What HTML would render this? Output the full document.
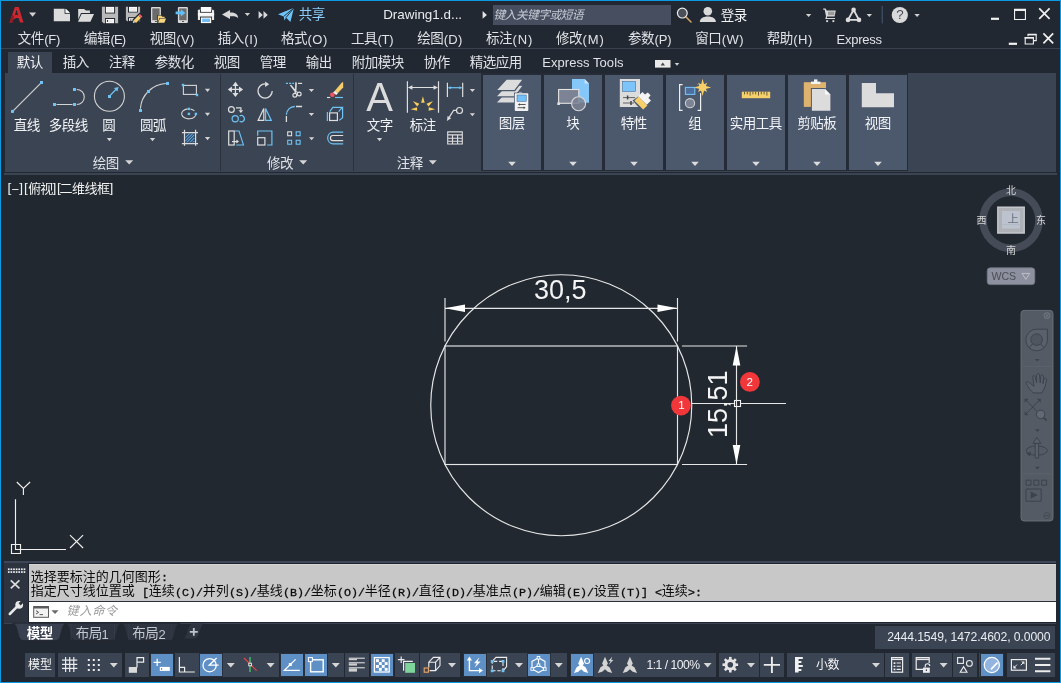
<!DOCTYPE html>
<html lang="zh-CN"><head><meta charset="utf-8"><title>Autodesk AutoCAD - Drawing1.dwg</title>
<style>
html,body{margin:0;padding:0;background:#222831;}
body{width:1061px;height:683px;overflow:hidden;font-family:"Liberation Sans",sans-serif;}
#app{will-change:transform;position:relative;width:1061px;height:683px;overflow:hidden;background:#222831;}
.bx,.tx,.cj,.ic{position:absolute;display:block;}
.tx{white-space:pre;font-family:"Liberation Sans",sans-serif;}
.mono{font-family:"Liberation Mono",monospace;}
.cj{white-space:pre;font-family:"Liberation Sans","Noto Sans CJK SC",sans-serif;}
.ic{overflow:visible;}

</style></head>
<body>
<div id="app">
<div class="bx" style="left:0px;top:0px;width:1061px;height:683px;background:#0e9ae2;"></div>
<div class="bx" style="left:1px;top:1px;width:1059px;height:681px;background:#222831;"></div>
<div class="bx" style="left:1px;top:48px;width:1059px;height:1px;background:#3a4250;"></div>
<div class="bx" style="left:8px;top:52px;width:44px;height:21px;background:#3b4453;"></div>
<div class="bx" style="left:5px;top:73px;width:1051px;height:99px;background:#3b4453;"></div>
<div class="bx" style="left:4px;top:173px;width:1053px;height:2px;background:#3b4453;"></div>
<div class="bx" style="left:1px;top:175px;width:1059px;height:386px;background:#212830;"></div>
<div class="bx" style="left:220px;top:74px;width:1px;height:97px;background:#2a313c;"></div>
<div class="bx" style="left:353px;top:74px;width:1px;height:97px;background:#2a313c;"></div>
<div class="bx" style="left:481px;top:73px;width:427.2px;height:98.2px;background:#262c37;"></div>
<div class="bx" style="left:483px;top:75px;width:58px;height:95px;background:#4c586c;"></div>
<div class="bx" style="left:544px;top:75px;width:58px;height:95px;background:#4c586c;"></div>
<div class="bx" style="left:605px;top:75px;width:58px;height:95px;background:#4c586c;"></div>
<div class="bx" style="left:666px;top:75px;width:58px;height:95px;background:#4c586c;"></div>
<div class="bx" style="left:727px;top:75px;width:58px;height:95px;background:#4c586c;"></div>
<div class="bx" style="left:788px;top:75px;width:58px;height:95px;background:#4c586c;"></div>
<div class="bx" style="left:849px;top:75px;width:58px;height:95px;background:#4c586c;"></div>
<span class="cj" style="left:298.75px;top:7.1px;width:26px;height:16.2px;font-size:13.5px;line-height:16.2px;letter-spacing:-0.5px;color:#8ccbf7">共享</span>
<span class="tx" style="left:383.2px;top:6.5px;font-size:13.4px;line-height:16.08px;color:#e9ebee;letter-spacing:0px">Drawing1.d...</span>
<div class="bx" style="left:493px;top:5px;width:178px;height:20px;background:#464e60;"></div>
<span class="cj" style="left:493.4px;top:7.6px;width:93.6px;height:14.16px;font-size:11.8px;line-height:14.16px;letter-spacing:-0.6px;font-style:italic;color:#c6cad2">键入关键字或短语</span>
<span class="cj" style="left:720.75px;top:7.8px;width:26px;height:16.2px;font-size:13.5px;line-height:16.2px;letter-spacing:-0.5px;color:#f2f3f5">登录</span>
<span class="cj" style="left:17.75px;top:30.8px;width:26px;height:16.2px;font-size:13.5px;line-height:16.2px;letter-spacing:-0.5px;color:#dfe2e7">文件</span>
<span class="tx" style="left:44.3px;top:32.0px;font-size:13px;line-height:15.6px;color:#dfe2e7;letter-spacing:-0.28px">(F)</span>
<span class="cj" style="left:84.0px;top:30.8px;width:26px;height:16.2px;font-size:13.5px;line-height:16.2px;letter-spacing:-0.5px;color:#dfe2e7">编辑</span>
<span class="tx" style="left:110.55px;top:32.0px;font-size:13px;line-height:15.6px;color:#dfe2e7;letter-spacing:-0.9px">(E)</span>
<span class="cj" style="left:149.75px;top:30.8px;width:26px;height:16.2px;font-size:13.5px;line-height:16.2px;letter-spacing:-0.5px;color:#dfe2e7">视图</span>
<span class="tx" style="left:176.3px;top:32.0px;font-size:13px;line-height:15.6px;color:#dfe2e7;letter-spacing:0.4px">(V)</span>
<span class="cj" style="left:217.75px;top:30.8px;width:26px;height:16.2px;font-size:13.5px;line-height:16.2px;letter-spacing:-0.5px;color:#dfe2e7">插入</span>
<span class="tx" style="left:244.3px;top:32.0px;font-size:13px;line-height:15.6px;color:#dfe2e7;letter-spacing:0.6px">(I)</span>
<span class="cj" style="left:281.0px;top:30.8px;width:26px;height:16.2px;font-size:13.5px;line-height:16.2px;letter-spacing:-0.5px;color:#dfe2e7">格式</span>
<span class="tx" style="left:307.55px;top:32.0px;font-size:13px;line-height:15.6px;color:#dfe2e7;letter-spacing:0.45px">(O)</span>
<span class="cj" style="left:351.0px;top:30.8px;width:26px;height:16.2px;font-size:13.5px;line-height:16.2px;letter-spacing:-0.5px;color:#dfe2e7">工具</span>
<span class="tx" style="left:377.55px;top:32.0px;font-size:13px;line-height:15.6px;color:#dfe2e7;letter-spacing:-0.28px">(T)</span>
<span class="cj" style="left:417.25px;top:30.8px;width:26px;height:16.2px;font-size:13.5px;line-height:16.2px;letter-spacing:-0.5px;color:#dfe2e7">绘图</span>
<span class="tx" style="left:443.8px;top:32.0px;font-size:13px;line-height:15.6px;color:#dfe2e7;letter-spacing:0.2px">(D)</span>
<span class="cj" style="left:486.0px;top:30.8px;width:26px;height:16.2px;font-size:13.5px;line-height:16.2px;letter-spacing:-0.5px;color:#dfe2e7">标注</span>
<span class="tx" style="left:512.55px;top:32.0px;font-size:13px;line-height:15.6px;color:#dfe2e7;letter-spacing:0.9px">(N)</span>
<span class="cj" style="left:556.0px;top:30.8px;width:26px;height:16.2px;font-size:13.5px;line-height:16.2px;letter-spacing:-0.5px;color:#dfe2e7">修改</span>
<span class="tx" style="left:582.55px;top:32.0px;font-size:13px;line-height:15.6px;color:#dfe2e7;letter-spacing:0.9px">(M)</span>
<span class="cj" style="left:628.0px;top:30.8px;width:26px;height:16.2px;font-size:13.5px;line-height:16.2px;letter-spacing:-0.5px;color:#dfe2e7">参数</span>
<span class="tx" style="left:654.55px;top:32.0px;font-size:13px;line-height:15.6px;color:#dfe2e7;letter-spacing:-0.14px">(P)</span>
<span class="cj" style="left:695.25px;top:30.8px;width:26px;height:16.2px;font-size:13.5px;line-height:16.2px;letter-spacing:-0.5px;color:#dfe2e7">窗口</span>
<span class="tx" style="left:721.8px;top:32.0px;font-size:13px;line-height:15.6px;color:#dfe2e7;letter-spacing:0.4px">(W)</span>
<span class="cj" style="left:766.75px;top:30.8px;width:26px;height:16.2px;font-size:13.5px;line-height:16.2px;letter-spacing:-0.5px;color:#dfe2e7">帮助</span>
<span class="tx" style="left:793.3px;top:32.0px;font-size:13px;line-height:15.6px;color:#dfe2e7;letter-spacing:0.45px">(H)</span>
<span class="tx" style="left:836.6px;top:32.0px;font-size:13px;line-height:15.6px;color:#dfe2e7;letter-spacing:-0.25px">Express</span>
<span class="cj" style="left:16.75px;top:55.1px;width:26px;height:16.2px;font-size:13.5px;line-height:16.2px;letter-spacing:-0.5px;color:#f2f3f5">默认</span>
<span class="cj" style="left:62.75px;top:55.1px;width:26px;height:16.2px;font-size:13.5px;line-height:16.2px;letter-spacing:-0.5px;color:#dfe2e7">插入</span>
<span class="cj" style="left:108.75px;top:55.1px;width:26px;height:16.2px;font-size:13.5px;line-height:16.2px;letter-spacing:-0.5px;color:#dfe2e7">注释</span>
<span class="cj" style="left:154.75px;top:55.1px;width:39px;height:16.2px;font-size:13.5px;line-height:16.2px;letter-spacing:-0.5px;color:#dfe2e7">参数化</span>
<span class="cj" style="left:213.75px;top:55.1px;width:26px;height:16.2px;font-size:13.5px;line-height:16.2px;letter-spacing:-0.5px;color:#dfe2e7">视图</span>
<span class="cj" style="left:259.75px;top:55.1px;width:26px;height:16.2px;font-size:13.5px;line-height:16.2px;letter-spacing:-0.5px;color:#dfe2e7">管理</span>
<span class="cj" style="left:305.75px;top:55.1px;width:26px;height:16.2px;font-size:13.5px;line-height:16.2px;letter-spacing:-0.5px;color:#dfe2e7">输出</span>
<span class="cj" style="left:351.75px;top:55.1px;width:52px;height:16.2px;font-size:13.5px;line-height:16.2px;letter-spacing:-0.5px;color:#dfe2e7">附加模块</span>
<span class="cj" style="left:423.75px;top:55.1px;width:26px;height:16.2px;font-size:13.5px;line-height:16.2px;letter-spacing:-0.5px;color:#dfe2e7">协作</span>
<span class="cj" style="left:469.75px;top:55.1px;width:52px;height:16.2px;font-size:13.5px;line-height:16.2px;letter-spacing:-0.5px;color:#dfe2e7">精选应用</span>
<span class="tx" style="left:542.3px;top:55.3px;font-size:13px;line-height:15.6px;color:#dfe2e7;letter-spacing:0.05px">Express Tools</span>
<span class="cj" style="left:13.75px;top:118.4px;width:26px;height:16.2px;font-size:13.5px;line-height:16.2px;letter-spacing:-0.5px;color:#f2f3f5">直线</span>
<span class="cj" style="left:48.75px;top:118.4px;width:39px;height:16.2px;font-size:13.5px;line-height:16.2px;letter-spacing:-0.5px;color:#f2f3f5">多段线</span>
<span class="cj" style="left:102.25px;top:118.4px;width:13px;height:16.2px;font-size:13.5px;line-height:16.2px;letter-spacing:-0.5px;color:#f2f3f5">圆</span>
<span class="cj" style="left:140.05px;top:118.4px;width:26px;height:16.2px;font-size:13.5px;line-height:16.2px;letter-spacing:-0.5px;color:#f2f3f5">圆弧</span>
<span class="cj" style="left:366.75px;top:118.4px;width:26px;height:16.2px;font-size:13.5px;line-height:16.2px;letter-spacing:-0.5px;color:#f2f3f5">文字</span>
<span class="cj" style="left:409.75px;top:118.4px;width:26px;height:16.2px;font-size:13.5px;line-height:16.2px;letter-spacing:-0.5px;color:#f2f3f5">标注</span>
<span class="cj" style="left:92.75px;top:156.1px;width:26px;height:16.2px;font-size:13.5px;line-height:16.2px;letter-spacing:-0.5px;color:#dfe2e7">绘图</span>
<span class="cj" style="left:267.05px;top:156.1px;width:26px;height:16.2px;font-size:13.5px;line-height:16.2px;letter-spacing:-0.5px;color:#dfe2e7">修改</span>
<span class="cj" style="left:396.75px;top:156.1px;width:26px;height:16.2px;font-size:13.5px;line-height:16.2px;letter-spacing:-0.5px;color:#dfe2e7">注释</span>
<span class="cj" style="left:498.75px;top:116.1px;width:26px;height:16.2px;font-size:13.5px;line-height:16.2px;letter-spacing:-0.5px;color:#f2f3f5">图层</span>
<span class="cj" style="left:566.25px;top:116.1px;width:13px;height:16.2px;font-size:13.5px;line-height:16.2px;letter-spacing:-0.5px;color:#f2f3f5">块</span>
<span class="cj" style="left:620.75px;top:116.1px;width:26px;height:16.2px;font-size:13.5px;line-height:16.2px;letter-spacing:-0.5px;color:#f2f3f5">特性</span>
<span class="cj" style="left:688.25px;top:116.1px;width:13px;height:16.2px;font-size:13.5px;line-height:16.2px;letter-spacing:-0.5px;color:#f2f3f5">组</span>
<span class="cj" style="left:729.75px;top:116.1px;width:52px;height:16.2px;font-size:13.5px;line-height:16.2px;letter-spacing:-0.5px;color:#f2f3f5">实用工具</span>
<span class="cj" style="left:797.25px;top:116.1px;width:39px;height:16.2px;font-size:13.5px;line-height:16.2px;letter-spacing:-0.5px;color:#f2f3f5">剪贴板</span>
<span class="cj" style="left:864.75px;top:116.1px;width:26px;height:16.2px;font-size:13.5px;line-height:16.2px;letter-spacing:-0.5px;color:#f2f3f5">视图</span>
<svg class="ic" style="left:0px;top:0px" width="1061" height="75" viewBox="0 0 1061 75"><path d="M9.4 22.6L14.9 7H18.7L23.5 22.6H20L18.7 18.2C16.6 17.7 14.6 18.3 13.3 19.7L12.3 22.6Z" fill="#cc2832"/><path d="M14.9 15.2L16.6 9.6L18.1 15.4C16.9 15 15.9 15 14.9 15.2Z" fill="#222831"/><path d="M9.4 22.6L12.3 14.4L14.2 16.6L12.3 22.6Z" fill="#8f1c24"/><path d="M29.1 12.6h7l-3.5 4.2z" fill="#d2d2d2"/><path d="M53.8 8.7H64.6V13.7H70V21.3H53.8Z" fill="#dcdcdc"/><path d="M65.6 8.7L70 13V12.7H65.6Z" fill="#fafafa"/><path d="M65.7 8.8L69.9 12.8H65.7Z" fill="#fafafa"/><path d="M78.2 8.9H84L86 10.6H89.9V12.9H81L78.2 19.5Z" fill="#dcdcdc"/><path d="M81.6 13.9H94L90.4 21.8H78Z" fill="#dcdcdc"/><path d="M101.9 6.8H118.1V23.2H103.5L101.9 21.6Z" fill="#b9b9b9"/><rect x="105" y="6" width="10.1" height="7.5" fill="#222831"/><rect x="105.9" y="6.9" width="8.2" height="5.7" fill="#ffffff"/><rect x="106.7" y="7.7" width="6.6" height="4.1" fill="#ececec"/><rect x="105" y="18" width="10.1" height="6" fill="#222831"/><rect x="105.9" y="19" width="8.2" height="4.2" fill="#ffffff"/><rect x="108.4" y="19.8" width="5" height="2.6" fill="#ececec"/><rect x="106.9" y="19.9" width="1.2" height="2" fill="#333a45"/><path d="M125.9 6.8H140.1V21.3H127.3L125.9 19.9Z" fill="#b9b9b9"/><rect x="128" y="6" width="9.9" height="6.5" fill="#222831"/><rect x="129" y="6.9" width="8" height="4.8" fill="#ffffff"/><rect x="129.8" y="7.7" width="6.4" height="3.2" fill="#ececec"/><rect x="128" y="17.2" width="9" height="5" fill="#222831"/><rect x="129" y="18.2" width="5" height="2.7" fill="#ffffff"/><rect x="130.3" y="19.2" width="1.1" height="1.7" fill="#333a45"/><path d="M131.8 24L132.6 19.6L139.6 12.6L143.6 16.6L136.6 23.6Z" fill="#222831"/><path d="M132.8 23L133.5 20.4L135.4 22.3Z" fill="#f0f0f0"/><path d="M133.5 20.4L138.4 15.5L140.9 18L136 22.9L135.4 22.3Z" fill="#f7d272"/><path d="M138.4 15.5L139.9 14L142.4 16.5L140.9 18Z" fill="#f4626a"/><rect x="151" y="7" width="9.9" height="16" rx="1" fill="#d8d8d8"/><rect x="152.3" y="8.4" width="7.3" height="11.8" fill="#6b6b6b"/><rect x="155" y="21" width="1.9" height="0.9" fill="#444"/><path d="M157.2 14.9H161.6L162.8 16.1H166.5V23.4H157.2Z" fill="#222831"/><path d="M157.9 15.6H161.2L162.3 16.8H164.6V18H159.5L157.9 21.8Z" fill="#f2cf77"/><path d="M159.9 18.6H166.1L164.3 22.8H158.1Z" fill="#f5d680"/><rect x="177.9" y="7" width="10" height="16" rx="1" fill="#d8d8d8"/><rect x="179.2" y="8.4" width="7.4" height="11.8" fill="#6b6b6b"/><rect x="182" y="21" width="1.9" height="0.9" fill="#444"/><path d="M175.6 11.5H180.8V9.2L185.4 12.9L180.8 16.6V14.3H175.6Z" fill="#5ec0f8"/><rect x="200.9" y="7" width="10.3" height="4.9" fill="#fafafa"/><path d="M198.9 9.8H213.1L214.1 10.8V20H197.9V10.8Z" fill="#e9e9e9"/><rect x="197.9" y="9.8" width="2.2" height="2.2" fill="#e9e9e9"/><rect x="200" y="9.8" width="12" height="2.9" fill="#222831"/><rect x="200.9" y="7" width="10.3" height="4.9" fill="#fafafa"/><rect x="197.9" y="13" width="16.2" height="2.6" fill="#fafafa"/><rect x="200" y="16.6" width="12" height="7.3" fill="#222831"/><rect x="200.9" y="17.5" width="10.3" height="5.6" fill="#fafafa"/><rect x="202.1" y="18.6" width="7.9" height="3.4" fill="#73bdf5"/><path d="M222 14.5L230 9.9V12.6C234.5 12.4 238 14 238.2 18.3C236.6 16.3 234 16 230 16.3V19.1Z" fill="#d8d8d8"/><path d="M244.70000000000002 12.9h5.4l-2.7 3.2z" fill="#d2d2d2"/><path d="M258.6 11V18.8L262.8 14.9ZM263.5 11V18.8L267.8 14.9Z" fill="#d8d8d8"/><path d="M278 14.2L294 7.8L290.4 21.9L286 17.6L284.6 20.6L283.6 16.5Z" fill="#6ec3f7"/><path d="M283.6 16.5L294 7.8L286 17.6" fill="none" stroke="#222831" stroke-width="0.9"/><path d="M482.6 11V18.8L486.9 14.9Z" fill="#e6e6e6"/><path d="M686 17L691 22" stroke="#d2a264" stroke-width="1.6" stroke-linecap="round"/><circle cx="682.3" cy="13.1" r="4.9" fill="#4a4f59" stroke="#eeeeee" stroke-width="1.2"/><circle cx="707.8" cy="11.2" r="4.3" fill="#dadada"/><path d="M699.8 21.9C699.8 18.6 703 16.4 707.8 16.4C712.6 16.4 715.9 18.6 715.9 21.9Z" fill="#dadada"/><path d="M805.9 14h5.4l-2.7 3z" fill="#d2d2d2"/><path d="M823.2 8.6H825.6L826.6 10.6H835.8L834.6 16.4H827.2L826.8 17.9H835V19H825.3L826 16.2L824.7 9.7H823.2Z" fill="#d8d8d8"/><rect x="828" y="11.6" width="6.3" height="3.6" fill="#9a9a9a"/><rect x="826.2" y="20.2" width="1.9" height="1.9" fill="#d8d8d8"/><rect x="832.4" y="20.2" width="1.9" height="1.9" fill="#d8d8d8"/><path d="M848 19.9L853.6 9.9L859 19.9Z" fill="none" stroke="#dcdcdc" stroke-width="1.9" stroke-linejoin="round"/><circle cx="853.6" cy="9.9" r="2.3" fill="#dcdcdc"/><circle cx="848" cy="19.9" r="2.3" fill="#dcdcdc"/><circle cx="859" cy="19.9" r="2.3" fill="#dcdcdc"/><path d="M866.5999999999999 14h5.4l-2.7 3z" fill="#d2d2d2"/><rect x="881.7" y="6" width="1" height="17.4" fill="#46597a"/><circle cx="899.8" cy="15" r="8.1" fill="#d9d9d9"/><path d="M914.4 14h5.4l-2.7 3z" fill="#d2d2d2"/><rect x="991" y="17.7" width="8" height="2.2" fill="#f0f0f0"/><path d="M1014 8.8H1026V20H1014ZM1015.1 10.9V18.9H1024.9V10.9Z" fill="#f0f0f0" fill-rule="evenodd"/><path d="M1039.2 8.4L1049.6 18.9M1049.6 8.4L1039.2 18.9" stroke="#f0f0f0" stroke-width="1.7"/><rect x="1008.8" y="42.7" width="8.2" height="2.2" fill="#f0f0f0"/><path d="M1028 36.3V34.3H1036.2V40.6H1033.6" fill="none" stroke="#f0f0f0" stroke-width="1.1"/><rect x="1028" y="34" width="8.2" height="1.4" fill="#f0f0f0"/><path d="M1025.2 37.6H1033.4V44H1025.2Z" fill="none" stroke="#f0f0f0" stroke-width="1.1"/><rect x="1024.7" y="37" width="9.2" height="1.6" fill="#f0f0f0"/><path d="M1043.4 33.4L1053.2 43.4M1053.2 33.4L1043.4 43.4" stroke="#f0f0f0" stroke-width="1.7"/><rect x="655" y="60" width="15.5" height="7.6" fill="#e9e9e9"/><path d="M660.6 65.4H665L662.8 62.4Z" fill="#444"/><path d="M674.7 63h4.6l-2.3 2.8z" fill="#d2d2d2"/></svg>
<span class="tx" style="left:896.2px;top:7.4px;font-size:13.4px;line-height:16.08px;color:#4a4e57;">?</span>
<svg class="ic" style="left:5px;top:75px" width="216" height="97" viewBox="5 75 216 97"><path d="M13.6 110.4L40.6 83.4" stroke="#d4d4d4" stroke-width="1.1"/><rect x="11.0" y="109.9" width="3" height="3" fill="#6ec3f4"/><rect x="40.0" y="81.0" width="3" height="3" fill="#6ec3f4"/><path d="M56.5 104.5H72.5M76.8 104.5A7.5 7.5 0 0 0 76.8 89.5" fill="none" stroke="#d4d4d4" stroke-width="1.1"/><rect x="53.0" y="103.0" width="3" height="3" fill="#6ec3f4"/><rect x="73.0" y="103.0" width="3" height="3" fill="#6ec3f4"/><rect x="73.0" y="88.0" width="3" height="3" fill="#6ec3f4"/><circle cx="109.4" cy="96.3" r="15" fill="none" stroke="#d4d4d4" stroke-width="1.1"/><path d="M110.5 95L116 89.5" stroke="#6ec3f4" stroke-width="1.2"/><path d="M118.6 86.9L117.4 91.6L113.9 88.1Z" fill="#6ec3f4"/><rect x="108.0" y="95.0" width="3" height="3" fill="#6ec3f4"/><path d="M106.80000000000001 138h5.2l-2.6 3.2z" fill="#d4d4d4"/><path d="M140.4 108.6A27 27 0 0 1 165.8 83.5" fill="none" stroke="#d4d4d4" stroke-width="1.1"/><rect x="139.0" y="109.0" width="3" height="3" fill="#6ec3f4"/><rect x="147.0" y="90.0" width="3" height="3" fill="#6ec3f4"/><rect x="166.0" y="82.0" width="3" height="3" fill="#6ec3f4"/><path d="M149.9 138h5.2l-2.6 3.2z" fill="#d4d4d4"/><rect x="183.4" y="85.4" width="13" height="9" fill="none" stroke="#d4d4d4" stroke-width="1.1"/><rect x="181.8" y="83.8" width="2.4" height="2.4" fill="#6ec3f4"/><rect x="195.8" y="93.8" width="2.4" height="2.4" fill="#6ec3f4"/><path d="M204.9 88.8h5.2l-2.6 3.2z" fill="#d4d4d4"/><path d="M187.6 108.9A7.2 5 0 1 0 196 113.2" fill="none" stroke="#d4d4d4" stroke-width="1.1"/><path d="M190.6 109.1A7.2 5 0 0 1 194.4 110.8" fill="none" stroke="#d4d4d4" stroke-width="1.1"/><rect x="187.70000000000002" y="107.7" width="2.4" height="2.4" fill="#6ec3f4"/><rect x="187.70000000000002" y="112.7" width="2.4" height="2.4" fill="#6ec3f4"/><rect x="194.70000000000002" y="112.7" width="2.4" height="2.4" fill="#6ec3f4"/><path d="M204.9 112.8h5.2l-2.6 3.2z" fill="#d4d4d4"/><rect x="185.6" y="133.6" width="8.8" height="8.8" fill="#33557c"/><path d="M185.6 137.6L189.6 133.6M185.6 140.8L192.8 133.6M186.8 142.4L194.4 134.8M190 142.4L194.4 138M193 142.4L194.4 141" stroke="#79c9f8" stroke-width="0.85"/><path d="M184.5 129.8V145.8M195.6 129.8V145.8M181.9 132.6H198M181.9 143.7H198" stroke="#dcdcdc" stroke-width="1.2"/><path d="M204.9 137h5.2l-2.6 3.2z" fill="#d4d4d4"/><path d="M125.19999999999999 160.2h8l-4.0 4.4z" fill="#d4d4d4"/></svg>
<svg class="ic" style="left:221px;top:75px" width="132" height="97" viewBox="221 75 132 97"><path d="M235.45 83.5V95.4M229.5 89.45H241.4" stroke="#dedede" stroke-width="1.3"/><path d="M235.45 81.8L238.5 85.9H232.4ZM235.45 97.1L238.5 93H232.4ZM227.8 89.45L231.9 86.4V92.5ZM243.1 89.45L239 86.4V92.5Z" fill="#dedede"/><path d="M265.1 83.9A7.1 7.1 0 1 0 272.2 91" fill="none" stroke="#dedede" stroke-width="1.3"/><path d="M269.2 84.3L265.1 81.6V87Z" fill="#dedede"/><path d="M285.9 83.4H294" stroke="#6ec3f4" stroke-width="1.2" stroke-dasharray="2.1 1.1"/><path d="M298 83.4H302.1" stroke="#dedede" stroke-width="1.2"/><path d="M295.2 82.2L296.9 82.6L296.4 91.2L295 92.6ZM289.8 85.3L291.2 84.8L296.9 91.6L295.4 92.7Z" fill="#dedede"/><circle cx="294.8" cy="95.2" r="1.9" fill="none" stroke="#dedede" stroke-width="1.2"/><circle cx="299.2" cy="94" r="1.9" fill="none" stroke="#dedede" stroke-width="1.2"/><path d="M295.4 91.8L295 93.4M296.4 91.6L297.8 92.8" stroke="#dedede" stroke-width="1.2"/><path d="M308.7 88.9h5.4l-2.7 3.2z" fill="#d4d4d4"/><path d="M334.2 91.6L342.3 81.9L343.2 82.4V87.4L337.4 93.4Z" fill="#f5cd6c"/><path d="M333 92.7L334.4 91.3L337.7 93.2L336.3 94.9Z" fill="#f4f4f4"/><circle cx="332.4" cy="94.8" r="2.3" fill="#f2555f"/><path d="M327 97.5H330.2" stroke="#dedede" stroke-width="1.2"/><path d="M335 97.5H343" stroke="#6ec3f4" stroke-width="1.2"/><circle cx="231.4" cy="109.5" r="2.9" fill="none" stroke="#dedede" stroke-width="1.2"/><path d="M236 107.9H240.9V110.6" fill="none" stroke="#dedede" stroke-width="1.2"/><path d="M240.9 113.1L238.6 110.2H243.2Z" fill="#dedede"/><circle cx="235.2" cy="118.7" r="3.1" fill="none" stroke="#6ec3f4" stroke-width="1.2"/><path d="M239.6 116.1A3.1 3.1 0 1 1 239.6 121.3" fill="none" stroke="#6ec3f4" stroke-width="1.2"/><path d="M263.8 108.5V120.4H258.1Z" fill="none" stroke="#dedede" stroke-width="1.2"/><path d="M265.6 108.5V120.4H271.3Z" fill="none" stroke="#6ec3f4" stroke-width="1.2"/><path d="M286.4 114.7A8.4 8.4 0 0 1 294.8 106.5" fill="none" stroke="#6ec3f4" stroke-width="1.3"/><path d="M286.4 116V121.9M296 106.5H302.1" stroke="#dedede" stroke-width="1.3"/><path d="M308.7 112.9h5.4l-2.7 3.2z" fill="#d4d4d4"/><path d="M329.8 111.6L332.8 107.3H342.3L338.6 111.6M342.6 107.4V117.6L339.2 120.4M327.4 112V121" fill="none" stroke="#6ec3f4" stroke-width="1.2"/><rect x="329.6" y="112.9" width="7.8" height="7.6" fill="none" stroke="#dedede" stroke-width="1.2"/><path d="M234.8 131H239L243.5 145H236.3" fill="none" stroke="#6ec3f4" stroke-width="1.1"/><rect x="228.7" y="131" width="5.5" height="14" fill="none" stroke="#dedede" stroke-width="1.2"/><path d="M232 141.6H237" stroke="#dedede" stroke-width="1.2"/><path d="M239 141.6L236.4 139.6V143.6Z" fill="#dedede"/><path d="M257.7 135.7V131H271.9V145H267.2" fill="none" stroke="#6ec3f4" stroke-width="1.2"/><rect x="257.7" y="137.7" width="7.2" height="7.3" fill="none" stroke="#dedede" stroke-width="1.2"/><rect x="287.7" y="131.8" width="3.9" height="3.9" fill="none" stroke="#dedede" stroke-width="1.1"/><rect x="296.2" y="131.8" width="3.9" height="3.9" fill="none" stroke="#6ec3f4" stroke-width="1.1"/><rect x="287.7" y="140.3" width="3.9" height="3.9" fill="none" stroke="#6ec3f4" stroke-width="1.1"/><rect x="296.2" y="140.3" width="3.9" height="3.9" fill="none" stroke="#6ec3f4" stroke-width="1.1"/><path d="M309.0 137.2h5.2l-2.6 3z" fill="#d4d4d4"/><path d="M343.2 132.2H332.8A5.9 5.9 0 0 0 332.8 143.9H343.2" fill="none" stroke="#6ec3f4" stroke-width="1.2"/><path d="M343.2 135.5H333A2.6 2.6 0 0 0 333 140.7H343.2" fill="none" stroke="#dedede" stroke-width="1.2"/><path d="M299.2 160.2h8l-4.0 4.4z" fill="#d4d4d4"/></svg>
<svg class="ic" style="left:354px;top:75px" width="127" height="97" viewBox="354 75 127 97"><path d="M407.4 81.2V112.8M438.5 81.2V112.8M409 87.5H437" stroke="#dedede" stroke-width="1.2"/><path d="M407.9 87.5L412.4 85.2V89.8ZM438 87.5L433.5 85.2V89.8Z" fill="#dedede"/><path d="M424.70 102.80L422.90 96.20L421.10 102.80Z" fill="#f7cb5d"/><path d="M428.62 106.55L432.96 101.02L426.45 103.67Z" fill="#f7cb5d"/><path d="M419.35 103.67L412.84 101.02L417.18 106.55Z" fill="#f7cb5d"/><path d="M428.64 110.70L435.29 109.23L428.76 107.30Z" fill="#f7cb5d"/><path d="M417.04 107.30L410.51 109.23L417.16 110.70Z" fill="#f7cb5d"/><path d="M447.4 82.7V97M462.7 82.7V97" stroke="#dedede" stroke-width="1.2"/><path d="M448.6 87.7H461.5" stroke="#6ec3f4" stroke-width="1.2"/><path d="M448 87.7L450.8 86.2V89.2ZM462.1 87.7L459.3 86.2V89.2Z" fill="#6ec3f4"/><path d="M469.79999999999995 89h5.2l-2.6 3z" fill="#d4d4d4"/><circle cx="459.5" cy="110.5" r="3" fill="none" stroke="#dedede" stroke-width="1.2"/><path d="M456.4 110.4H453.6L449 117.6" fill="none" stroke="#dedede" stroke-width="1.2"/><path d="M446.9 120.9L447.6 116L451.2 118.3Z" fill="#dedede"/><path d="M469.79999999999995 113.2h5.2l-2.6 3z" fill="#d4d4d4"/><path d="M447.7 131.9H462.3V144H447.7ZM447.7 134.9H462.3M447.7 138.2H462.3M447.7 141.2H462.3M452.5 134.9V144M457.6 134.9V144" fill="none" stroke="#dedede" stroke-width="1.1"/><path d="M376.9 138h5.2l-2.6 3.2z" fill="#d4d4d4"/><path d="M428.8 160.2h8l-4.0 4.4z" fill="#d4d4d4"/></svg>
<span class="tx" style="left:366.3px;top:73.0px;font-size:40px;line-height:48.0px;color:#dcdcdc;">A</span>
<svg class="ic" style="left:481px;top:75px" width="430" height="97" viewBox="481 75 430 97"><path d="M495.6 103.10000000000001L506.4 91.4H523.6L514.8 103.10000000000001Z" fill="#dcdcdc" stroke="#4c586c" stroke-width="1.3"/><path d="M495.6 96.9L506.4 85.2H523.6L514.8 96.9Z" fill="#dcdcdc" stroke="#4c586c" stroke-width="1.3"/><path d="M495.6 90.7L506.4 79H523.6L514.8 90.7Z" fill="#dcdcdc" stroke="#4c586c" stroke-width="1.3"/><rect x="514" y="92.6" width="15" height="19.2" fill="#4c586c"/><rect x="514.8" y="93.3" width="13.5" height="17.7" rx="0.8" fill="#f2f2f2"/><rect x="517" y="95" width="9.2" height="6.3" fill="#74c0f8" stroke="#2b5f8f" stroke-width="0.5"/><path d="M518.6 104.5H525.6M517.6 107.7H524.6" stroke="#444" stroke-width="0.9"/><path d="M518 104.5L520 103.2V105.8ZM525.6 107.7L523.6 106.4V109Z" fill="#444"/><path d="M572 79H584.6L589 83.4V102.8H572Z" fill="#86c7fa"/><path d="M584.6 79V83.4H589Z" fill="#c9e6fc"/><rect x="558.6" y="89.5" width="20.2" height="13.8" fill="#7b8394" stroke="#e2e2e2" stroke-width="1.1"/><rect x="557.3" y="102.4" width="2.6" height="2.6" fill="#e2e2e2"/><circle cx="578.6" cy="103.7" r="7" fill="#7b8394" fill-opacity="0.85" stroke="#d6d6d6" stroke-width="1.1"/><rect x="619.8" y="79" width="20.2" height="28" fill="#dcdcdc"/><rect x="622.6" y="81.5" width="13" height="9.9" fill="#7cc4f9" stroke="#2b5f8f" stroke-width="0.5"/><path d="M623 97.6H635M623 103H634" stroke="#555" stroke-width="0.9"/><path d="M627.6 95.6V99.6M631 101V105" stroke="#444" stroke-width="1.5"/><path d="M632.6 100.6L640.4 95L650 104.6L643 112.2Z" fill="#4c586c"/><path d="M634.4 100.8L638.6 96.6L647.4 105.4L643.2 109.6Z" fill="#f6cf6b"/><path d="M638.2 96.2L642.4 92L645 94.6L647.8 92.4L650.6 95.2L648.4 98L651 100.6L646.8 104.8Z" fill="#f4f4f4"/><path d="M682.6 84.7H679.6V110.3H682.6M697.6 84.7H700.6V110.3H697.6" fill="none" stroke="#f0f0f0" stroke-width="1.2"/><rect x="685.4" y="87.4" width="9.4" height="7" fill="#4d6f9d" stroke="#74c0f8" stroke-width="1.1"/><circle cx="690" cy="103.2" r="4.6" fill="#7b8394" stroke="#d0d0d0" stroke-width="1.1"/><circle cx="702.6" cy="87.4" r="6" fill="#4c586c"/><path d="M702.60 89.70L711.20 87.40L702.60 85.10Z" fill="#f8cf66"/><path d="M704.23 89.03L707.27 82.73L700.97 85.77Z" fill="#f8cf66"/><path d="M704.90 87.40L702.60 78.80L700.30 87.40Z" fill="#f8cf66"/><path d="M704.23 85.77L697.93 82.73L700.97 89.03Z" fill="#f8cf66"/><path d="M702.60 85.10L694.00 87.40L702.60 89.70Z" fill="#f8cf66"/><path d="M700.97 85.77L697.93 92.07L704.23 89.03Z" fill="#f8cf66"/><path d="M700.30 87.40L702.60 96.00L704.90 87.40Z" fill="#f8cf66"/><path d="M700.97 89.03L707.27 92.07L704.23 85.77Z" fill="#f8cf66"/><circle cx="702.6" cy="87.4" r="3.4" fill="#f8cf66"/><rect x="741.8" y="91.7" width="28.4" height="6.5" fill="#f5d06a"/><path d="M744.5 91.7V94.4M747.3 91.7V94.4M750.1 91.7V95.6M752.9 91.7V94.4M755.7 91.7V94.4M758.5 91.7V95.6M761.3 91.7V94.4M764.1 91.7V94.4M766.9 91.7V95.6" stroke="#5d5030" stroke-width="0.9"/><rect x="803.8" y="82.2" width="22.2" height="24.7" fill="#deb26f"/><rect x="811" y="81.6" width="9.4" height="2.4" fill="#f4f4f4"/><rect x="814" y="79.4" width="3.4" height="2.8" fill="#f4f4f4"/><path d="M810.9 88H825.4L831.4 94V111.8H810.9Z" fill="#4c586c"/><path d="M811.9 89H825L830.4 94.4V110.8H811.9Z" fill="#dcdcdc"/><path d="M825 89V94.4H830.4Z" fill="#f8f8f8"/><path d="M861.8 83H876V93.2H894V107.2H861.8Z" fill="#dcdcdc"/><path d="M508.2 161.8h7.6l-3.8 4.2z" fill="#dcdcdc"/><path d="M569.2 161.8h7.6l-3.8 4.2z" fill="#dcdcdc"/><path d="M630.2 161.8h7.6l-3.8 4.2z" fill="#dcdcdc"/><path d="M691.2 161.8h7.6l-3.8 4.2z" fill="#dcdcdc"/><path d="M752.2 161.8h7.6l-3.8 4.2z" fill="#dcdcdc"/><path d="M813.2 161.8h7.6l-3.8 4.2z" fill="#dcdcdc"/><path d="M874.2 161.8h7.6l-3.8 4.2z" fill="#dcdcdc"/></svg>
<span class="tx" style="left:7.4px;top:180.4px;font-size:13.6px;line-height:16.32px;color:#f0f0f0;">[</span>
<span class="tx" style="left:11.5px;top:181.9px;font-size:13px;line-height:15.6px;color:#f0f0f0;">−</span>
<span class="tx" style="left:19.2px;top:180.4px;font-size:13.6px;line-height:16.32px;color:#f0f0f0;">]</span>
<span class="tx" style="left:24.0px;top:180.4px;font-size:13.6px;line-height:16.32px;color:#f0f0f0;">[</span>
<span class="cj" style="left:28.2px;top:180.8px;width:24px;height:16.67px;font-size:13px;line-height:16.67px;letter-spacing:-1px;color:#f4f4f4">俯视</span>
<span class="tx" style="left:52.6px;top:180.4px;font-size:13.6px;line-height:16.32px;color:#f0f0f0;letter-spacing:0.6px">][</span>
<span class="cj" style="left:59.6px;top:180.8px;width:50.0px;height:16.63px;font-size:13px;line-height:16.63px;letter-spacing:-0.5px;color:#f4f4f4">二维线框</span>
<span class="tx" style="left:109.6px;top:180.4px;font-size:13.6px;line-height:16.32px;color:#f0f0f0;">]</span>
<svg class="ic" style="left:1px;top:175px" width="1059" height="386" viewBox="1 175 1059 386"><circle cx="561.25" cy="405.25" r="130.5" fill="none" stroke="#e6e6e6" stroke-width="1.15"/><rect x="445.0" y="346.0" width="232.5" height="118.5" fill="none" stroke="#e6e6e6" stroke-width="1.15"/><path d="M445.0 298V341.6M677.5 298V341.6M445.0 308.3H677.5" stroke="#e6e6e6" stroke-width="1.15"/><path d="M445.0 308.3l20 -3.8v7.6zM677.5 308.3l-20 -3.8v7.6z" fill="#ffffff"/><path d="M682 346.0H747.1M682 464.5H747.1M736.5 346.0V464.5" stroke="#e6e6e6" stroke-width="1.15"/><path d="M736.5 346.0l-3.8 19.6h7.6zM736.5 464.5l-3.8 -19.6h7.6z" fill="#ffffff"/><path d="M691 403.5H734.5M740.5 403.5H786" stroke="#e6e6e6" stroke-width="1"/><rect x="734.5" y="400.5" width="6" height="6" fill="none" stroke="#f4f4f4" stroke-width="1.1"/><circle cx="681" cy="405.6" r="9.9" fill="#f2373b"/><circle cx="749.9" cy="381.9" r="9.9" fill="#f2373b"/><path d="M15.5 499.3V549.5H66M11.5 544.5H20.5V553.5H11.5Z" fill="none" stroke="#f0f0f0" stroke-width="1.15"/><path d="M16.8 482L23.4 488.4L30.1 482M23.4 488.4V494.9M70 535.2L83.1 548M83.1 535.2L70 548" fill="none" stroke="#f0f0f0" stroke-width="1.15"/></svg>
<span class="tx" style="left:533.9px;top:274.3px;font-size:27px;line-height:32.4px;color:#f4f4f4;">30,5</span>
<span class="tx" style="left:705.2px;top:437.6px;font-size:27px;line-height:27px;color:#f4f4f4;transform-origin:0 0;transform:rotate(-90deg)">15,51</span>
<span class="tx" style="left:678.2px;top:398.4px;font-size:11.6px;line-height:13.92px;color:#ffffff;">1</span>
<span class="tx" style="left:746.6px;top:374.7px;font-size:11.6px;line-height:13.92px;color:#ffffff;">2</span>
<svg class="ic" style="left:975px;top:185px" width="80" height="105" viewBox="975 185 80 105"><circle cx="1011" cy="220.2" r="28" fill="none" stroke="#454c57" stroke-width="7.6"/><rect x="997" y="206.4" width="28" height="27.4" fill="#aeb1b6"/><rect x="998" y="207.4" width="26" height="25.4" fill="none" stroke="#c9ccd1" stroke-width="0.8"/><rect x="1002" y="211" width="18" height="17.6" fill="#bdc3ce"/><path d="M1002 224.6H1020" stroke="#a9b1be" stroke-width="0.6"/><rect x="987.2" y="267.8" width="47.6" height="16.8" rx="3.2" fill="#8d909e" stroke="#747785" stroke-width="0.8"/><path d="M1022 273.4H1029.6L1025.8 279.4Z" fill="none" stroke="#c3c5cd" stroke-width="0.9"/></svg>
<span class="cj" style="left:1006px;top:184.9px;width:10px;height:12.0px;font-size:10px;line-height:12px;color:#d6d6d6">北</span>
<span class="cj" style="left:1006px;top:245.3px;width:10px;height:12.0px;font-size:10px;line-height:12px;color:#d6d6d6">南</span>
<span class="cj" style="left:976.4px;top:214.7px;width:10px;height:12.0px;font-size:10px;line-height:12px;color:#d6d6d6">西</span>
<span class="cj" style="left:1036px;top:214.7px;width:10px;height:12.0px;font-size:10px;line-height:12px;color:#d6d6d6">东</span>
<span class="cj" style="left:1007.6px;top:213.1px;width:11.2px;height:13.44px;font-size:11.2px;line-height:13.44px;color:#6a707b">上</span>
<span class="tx" style="left:991.6px;top:269.9px;font-size:10.6px;line-height:12.72px;color:#4b4e58;letter-spacing:-0.1px">WCS</span>
<svg class="ic" style="left:1018px;top:308px" width="40" height="216" viewBox="1018 308 40 216"><rect x="1021" y="310.4" width="32" height="210.6" rx="3" fill="#555b64" stroke="#6b7179" stroke-width="0.9"/><circle cx="1047" cy="315.6" r="2.9" fill="none" stroke="#7a8088" stroke-width="0.8"/><path d="M1045.4 314L1048.6 317.2M1048.6 314L1045.4 317.2" stroke="#7a8088" stroke-width="0.8"/><path d="M1036.6 329.2H1047.4V340A10.8 10.8 0 1 1 1036.6 329.2Z" fill="#5b616a" stroke="#3d434c" stroke-width="1"/><circle cx="1036.6" cy="339.6" r="5.8" fill="#50565f" stroke="#3d434c" stroke-width="1"/><path d="M1032.6 343.8L1029.2 347.6M1040.6 343.8L1044 347.6" stroke="#3d434c" stroke-width="1"/><path d="M1034.9 359h4.6l-2.3 2.6z" fill="#3d434c"/><path d="M1023 366.4H1051" stroke="#5f656e" stroke-width="0.8"/><path d="M1030.6 383.6C1028 381.4 1026.4 381.4 1025.8 382.4C1027.6 386.6 1030.6 391.6 1034 393H1041.6C1044.6 389.6 1045.8 384.6 1046.6 379.2C1046 377.6 1044.4 377.8 1044 379.4L1043 383.6L1043.4 376C1042.8 374.2 1041 374.4 1040.8 376.2L1040.2 383L1039.4 374.4C1038.6 372.8 1036.8 373 1036.8 374.8L1036.6 383L1035 376.4C1034.2 374.8 1032.6 375.2 1032.8 377L1034 386.4Z" fill="#5b616a" stroke="#3d434c" stroke-width="1"/><path d="M1025.4 399.6L1040 414.4M1040 399.6L1025.4 414.4" stroke="#3d434c" stroke-width="1"/><path d="M1024.6 398.8H1028.6L1024.6 402.8ZM1040.8 398.8H1036.8L1040.8 402.8ZM1024.6 415.2H1028.6L1024.6 411.2Z" fill="#3d434c"/><circle cx="1040.6" cy="414.4" r="4.2" fill="#646a73" stroke="#3d434c" stroke-width="1"/><path d="M1043.6 417.6L1046.6 420.6" stroke="#3d434c" stroke-width="1.8"/><path d="M1035.0 429.2h4.8l-2.4 2.8z" fill="#3d434c"/><ellipse cx="1036.8" cy="450.6" rx="10.6" ry="4.6" fill="none" stroke="#3d434c" stroke-width="1"/><path d="M1035.2 443.4H1038.6V458H1035.2ZM1036.9 437.4L1040.8 443.4H1033Z" fill="#5b616a" stroke="#3d434c" stroke-width="1"/><path d="M1026 453.2L1031 451.8L1030 456.6Z" fill="#3d434c"/><path d="M1035.0 466.8h4.8l-2.4 2.8z" fill="#3d434c"/><path d="M1023 473.9H1051" stroke="#5f656e" stroke-width="0.8"/><path d="M1026 480.2H1031V485.2H1026ZM1033.8 480.2H1038.8V485.2H1033.8ZM1041.6 480.2H1046.6V485.2H1041.6ZM1026 489H1041.2V501.2H1026Z" fill="none" stroke="#3d434c" stroke-width="1"/><path d="M1030.6 491.4L1037.8 495.1L1030.6 498.8Z" fill="#3d434c"/><circle cx="1046.8" cy="515.6" r="3" fill="none" stroke="#444a53" stroke-width="0.9"/><path d="M1044.8 515.6H1048.8" stroke="#444a53" stroke-width="1.1"/></svg>
<div class="bx" style="left:4px;top:561px;width:1052px;height:2px;background:#3e4759;"></div>
<div class="bx" style="left:4px;top:563px;width:1052px;height:60px;background:#2d3440;"></div>
<div class="bx" style="left:28px;top:563px;width:1028px;height:60px;background:#1e242e;"></div>
<div class="bx" style="left:28.8px;top:564px;width:1027.2px;height:37px;background:#c8c8c8;"></div>
<div class="bx" style="left:28.8px;top:564px;width:1027.2px;height:1px;background:#d4d4d4;"></div>
<div class="bx" style="left:28.8px;top:601px;width:1027.2px;height:1px;background:#2a313d;"></div>
<div class="bx" style="left:28.8px;top:602px;width:1027.2px;height:20px;background:#ffffff;"></div>
<div class="bx" style="left:4px;top:623px;width:1052px;height:1px;background:#3a4250;"></div>
<span class="cj" style="left:30.8px;top:568.9px;width:130px;height:15.6px;font-size:13px;line-height:15.6px;color:#0c0c0c">选择要标注的几何图形</span>
<span class="tx mono" style="left:161.1px;top:571.4px;font-size:11.66px;line-height:15px;letter-spacing:0.003px;color:#0c0c0c;-webkit-text-stroke:0.3px #0c0c0c">:</span>
<span class="cj" style="left:30.8px;top:583.2px;width:104px;height:15.6px;font-size:13px;line-height:15.6px;color:#0c0c0c">指定尺寸线位置或</span>
<span class="tx mono" style="left:142.1px;top:585.7px;font-size:11.66px;line-height:15px;letter-spacing:0.003px;color:#0c0c0c;-webkit-text-stroke:0.3px #0c0c0c">[</span>
<span class="cj" style="left:148.8px;top:583.2px;width:26px;height:15.6px;font-size:13px;line-height:15.6px;color:#0c0c0c">连续</span>
<span class="tx mono" style="left:175.1px;top:585.7px;font-size:11.66px;line-height:15px;letter-spacing:0.003px;color:#0c0c0c;-webkit-text-stroke:0.3px #0c0c0c">(C)/</span>
<span class="cj" style="left:202.8px;top:583.2px;width:26px;height:15.6px;font-size:13px;line-height:15.6px;color:#0c0c0c">并列</span>
<span class="tx mono" style="left:229.1px;top:585.7px;font-size:11.66px;line-height:15px;letter-spacing:0.003px;color:#0c0c0c;-webkit-text-stroke:0.3px #0c0c0c">(S)/</span>
<span class="cj" style="left:256.8px;top:583.2px;width:26px;height:15.6px;font-size:13px;line-height:15.6px;color:#0c0c0c">基线</span>
<span class="tx mono" style="left:283.1px;top:585.7px;font-size:11.66px;line-height:15px;letter-spacing:0.003px;color:#0c0c0c;-webkit-text-stroke:0.3px #0c0c0c">(B)/</span>
<span class="cj" style="left:310.8px;top:583.2px;width:26px;height:15.6px;font-size:13px;line-height:15.6px;color:#0c0c0c">坐标</span>
<span class="tx mono" style="left:337.1px;top:585.7px;font-size:11.66px;line-height:15px;letter-spacing:0.003px;color:#0c0c0c;-webkit-text-stroke:0.3px #0c0c0c">(O)/</span>
<span class="cj" style="left:364.8px;top:583.2px;width:26px;height:15.6px;font-size:13px;line-height:15.6px;color:#0c0c0c">半径</span>
<span class="tx mono" style="left:391.1px;top:585.7px;font-size:11.66px;line-height:15px;letter-spacing:0.003px;color:#0c0c0c;-webkit-text-stroke:0.3px #0c0c0c">(R)/</span>
<span class="cj" style="left:418.8px;top:583.2px;width:26px;height:15.6px;font-size:13px;line-height:15.6px;color:#0c0c0c">直径</span>
<span class="tx mono" style="left:445.1px;top:585.7px;font-size:11.66px;line-height:15px;letter-spacing:0.003px;color:#0c0c0c;-webkit-text-stroke:0.3px #0c0c0c">(D)/</span>
<span class="cj" style="left:472.8px;top:583.2px;width:39px;height:15.6px;font-size:13px;line-height:15.6px;color:#0c0c0c">基准点</span>
<span class="tx mono" style="left:512.1px;top:585.7px;font-size:11.66px;line-height:15px;letter-spacing:0.003px;color:#0c0c0c;-webkit-text-stroke:0.3px #0c0c0c">(P)/</span>
<span class="cj" style="left:539.8px;top:583.2px;width:26px;height:15.6px;font-size:13px;line-height:15.6px;color:#0c0c0c">编辑</span>
<span class="tx mono" style="left:566.1px;top:585.7px;font-size:11.66px;line-height:15px;letter-spacing:0.003px;color:#0c0c0c;-webkit-text-stroke:0.3px #0c0c0c">(E)/</span>
<span class="cj" style="left:593.8px;top:583.2px;width:26px;height:15.6px;font-size:13px;line-height:15.6px;color:#0c0c0c">设置</span>
<span class="tx mono" style="left:620.1px;top:585.7px;font-size:11.66px;line-height:15px;letter-spacing:0.003px;color:#0c0c0c;-webkit-text-stroke:0.3px #0c0c0c">(T)] &lt;</span>
<span class="cj" style="left:661.8px;top:583.2px;width:26px;height:15.6px;font-size:13px;line-height:15.6px;color:#0c0c0c">连续</span>
<span class="tx mono" style="left:688.1px;top:585.7px;font-size:11.66px;line-height:15px;letter-spacing:0.003px;color:#0c0c0c;-webkit-text-stroke:0.3px #0c0c0c">&gt;:</span>
<span class="cj" style="left:66.6px;top:604.2px;width:55.2px;height:14.64px;font-size:12.2px;line-height:14.64px;letter-spacing:0.6px;font-style:italic;color:#9b9b9b">键入命令</span>
<svg class="ic" style="left:4px;top:564px" width="60" height="58" viewBox="4 564 60 58"><rect x="7.90" y="568.4" width="1.7" height="1.7" fill="#f0f0f0"/><rect x="7.90" y="571.2" width="1.7" height="1.7" fill="#f0f0f0"/><rect x="10.52" y="568.4" width="1.7" height="1.7" fill="#f0f0f0"/><rect x="10.52" y="571.2" width="1.7" height="1.7" fill="#f0f0f0"/><rect x="13.14" y="568.4" width="1.7" height="1.7" fill="#f0f0f0"/><rect x="13.14" y="571.2" width="1.7" height="1.7" fill="#f0f0f0"/><rect x="15.76" y="568.4" width="1.7" height="1.7" fill="#f0f0f0"/><rect x="15.76" y="571.2" width="1.7" height="1.7" fill="#f0f0f0"/><rect x="18.38" y="568.4" width="1.7" height="1.7" fill="#f0f0f0"/><rect x="18.38" y="571.2" width="1.7" height="1.7" fill="#f0f0f0"/><rect x="21.00" y="568.4" width="1.7" height="1.7" fill="#f0f0f0"/><rect x="21.00" y="571.2" width="1.7" height="1.7" fill="#f0f0f0"/><rect x="23.62" y="568.4" width="1.7" height="1.7" fill="#f0f0f0"/><rect x="23.62" y="571.2" width="1.7" height="1.7" fill="#f0f0f0"/><path d="M10.8 580.4L19.4 588.4M19.4 580.4L10.8 588.4" stroke="#dcdcdc" stroke-width="1.7"/><path d="M9.8 614L17.6 606.2" stroke="#e8e8e8" stroke-width="2.5" stroke-linecap="round"/><circle cx="19.2" cy="604.8" r="3.9" fill="#e8e8e8"/><path d="M19.6 604.4L23.6 600.4" stroke="#2d3440" stroke-width="2.9"/><rect x="33.7" y="606.5" width="14.8" height="10.8" fill="#f2f2f2" stroke="#5a5a5a" stroke-width="1"/><rect x="33.7" y="606.5" width="14.8" height="2" fill="#5a5a5a"/><path d="M36 610.6L38.6 612.3L36 614M39.6 614.6H43" fill="none" stroke="#444" stroke-width="0.9"/><path d="M51.4 610.2h7.2l-3.6 3.8z" fill="#6a6a6a"/></svg>
<svg class="ic" style="left:4px;top:622px" width="220" height="22" viewBox="4 622 220 22"><path d="M182.4 638.6C186 638.6 186.6 634 188 630C189.4 625.6 190.4 623.4 194 623.4H204.6C201.6 624 200.8 628 199.4 632C198 636.4 196.6 638.6 193 638.6Z" fill="#2e3541"/><path d="M120.6 623.2C124.6 623.2 125.19999999999999 630.2 127.0 636.2C128.0 639.6 129.4 640.6 132.0 640.6H168.79999999999998C171.39999999999998 640.6 172.79999999999998 639.6 173.79999999999998 636.2C175.6 630.2 176.2 623.2 180.2 623.2Z" fill="#2e3541" stroke="#222831" stroke-width="0.9"/><path d="M128.8 624V640M171.2 624V640" stroke="#363e4b" stroke-width="0.8"/><path d="M64.6 623.2C68.6 623.2 69.19999999999999 630.2 71.0 636.2C72.0 639.6 73.39999999999999 640.6 76.0 640.6H110.6C113.2 640.6 114.6 639.6 115.6 636.2C117.4 630.2 118 623.2 122 623.2Z" fill="#2e3541" stroke="#222831" stroke-width="0.9"/><path d="M71.2 624V640M114.4 624V640" stroke="#363e4b" stroke-width="0.8"/><path d="M12.4 623.2C16.4 623.2 17.0 630.2 18.8 636.2C19.8 639.6 21.200000000000003 640.6 23.8 640.6H55.199999999999996C57.8 640.6 59.199999999999996 639.6 60.199999999999996 636.2C61.99999999999999 630.2 62.599999999999994 623.2 66.6 623.2Z" fill="#394150" stroke="#222831" stroke-width="0.9"/><path d="M189.8 631.8H197.8M193.8 627.9V635.7" stroke="#bfc3ca" stroke-width="1.8"/></svg>
<span class="cj" style="left:26.75px;top:626.0px;width:26px;height:16.2px;font-size:13.5px;line-height:16.2px;letter-spacing:-0.5px;font-weight:bold;color:#ffffff">模型</span>
<span class="cj" style="left:75.75px;top:626.0px;width:26px;height:16.2px;font-size:13.5px;line-height:16.2px;letter-spacing:-0.5px;color:#c3c7ce">布局</span>
<span class="tx" style="left:101.6px;top:626.6px;font-size:13px;line-height:15.6px;color:#c3c7ce;">1</span>
<span class="cj" style="left:132.35px;top:626.0px;width:26px;height:16.2px;font-size:13.5px;line-height:16.2px;letter-spacing:-0.5px;color:#c3c7ce">布局</span>
<span class="tx" style="left:158.6px;top:626.6px;font-size:13px;line-height:15.6px;color:#c3c7ce;">2</span>
<div class="bx" style="left:875px;top:625.5px;width:180px;height:23.5px;background:#3b4453;"></div>
<span class="tx" style="left:887.2px;top:629.6px;font-size:12.2px;line-height:14.64px;color:#e9ecf0;letter-spacing:-0.1px">2444.1549, 1472.4602, 0.0000</span>
<div class="bx" style="left:25px;top:653px;width:30px;height:24px;background:#3b4453;"></div>
<div class="bx" style="left:58px;top:653px;width:64px;height:24px;background:#3b4453;"></div>
<div class="bx" style="left:125px;top:653px;width:24px;height:24px;background:#3b4453;"></div>
<div class="bx" style="left:151px;top:653px;width:22px;height:24px;background:#3b4453;"></div>
<div class="bx" style="left:175px;top:653px;width:103.5px;height:24px;background:#3b4453;"></div>
<div class="bx" style="left:280px;top:653px;width:64px;height:24px;background:#3b4453;"></div>
<div class="bx" style="left:345px;top:653px;width:23.5px;height:24px;background:#3b4453;"></div>
<div class="bx" style="left:370px;top:653px;width:23px;height:24px;background:#3b4453;"></div>
<div class="bx" style="left:395px;top:653px;width:24px;height:24px;background:#3b4453;"></div>
<div class="bx" style="left:420px;top:653px;width:40px;height:24px;background:#3b4453;"></div>
<div class="bx" style="left:463px;top:653px;width:103.5px;height:24px;background:#3b4453;"></div>
<div class="bx" style="left:570px;top:653px;width:146px;height:24px;background:#3b4453;"></div>
<div class="bx" style="left:719px;top:653px;width:40px;height:24px;background:#3b4453;"></div>
<div class="bx" style="left:760px;top:653px;width:24px;height:24px;background:#3b4453;"></div>
<div class="bx" style="left:787px;top:653px;width:97px;height:24px;background:#3b4453;"></div>
<div class="bx" style="left:885px;top:653px;width:24px;height:24px;background:#3b4453;"></div>
<div class="bx" style="left:912px;top:653px;width:39.5px;height:24px;background:#3b4453;"></div>
<div class="bx" style="left:953px;top:653px;width:24px;height:24px;background:#3b4453;"></div>
<div class="bx" style="left:979px;top:653px;width:25px;height:24px;background:#3b4453;"></div>
<div class="bx" style="left:1007px;top:653px;width:47.5px;height:24px;background:#3b4453;"></div>
<div class="bx" style="left:150px;top:653px;width:24px;height:24px;background:#2a303b;"></div>
<div class="bx" style="left:151px;top:654px;width:22px;height:22px;background:#5e8fc5;"></div>
<div class="bx" style="left:199px;top:653px;width:24px;height:24px;background:#2a303b;"></div>
<div class="bx" style="left:200px;top:654px;width:22px;height:22px;background:#5e8fc5;"></div>
<div class="bx" style="left:280px;top:653px;width:24px;height:24px;background:#2a303b;"></div>
<div class="bx" style="left:281px;top:654px;width:22px;height:22px;background:#5e8fc5;"></div>
<div class="bx" style="left:304px;top:653px;width:24px;height:24px;background:#2a303b;"></div>
<div class="bx" style="left:305px;top:654px;width:22px;height:22px;background:#5e8fc5;"></div>
<div class="bx" style="left:370px;top:653px;width:24px;height:24px;background:#2a303b;"></div>
<div class="bx" style="left:371px;top:654px;width:22px;height:22px;background:#5e8fc5;"></div>
<div class="bx" style="left:463px;top:653px;width:24px;height:24px;background:#2a303b;"></div>
<div class="bx" style="left:464px;top:654px;width:22px;height:22px;background:#5e8fc5;"></div>
<div class="bx" style="left:527px;top:653px;width:24px;height:24px;background:#2a303b;"></div>
<div class="bx" style="left:528px;top:654px;width:22px;height:22px;background:#5e8fc5;"></div>
<div class="bx" style="left:570px;top:653px;width:24px;height:24px;background:#2a303b;"></div>
<div class="bx" style="left:571px;top:654px;width:22px;height:22px;background:#5e8fc5;"></div>
<div class="bx" style="left:980px;top:653px;width:24px;height:24px;background:#2a303b;"></div>
<div class="bx" style="left:981px;top:654px;width:22px;height:22px;background:#5e8fc5;"></div>
<span class="cj" style="left:28px;top:657.6px;width:24px;height:14.4px;font-size:12px;line-height:14.4px;color:#f4f4f4">模型</span>
<span class="cj" style="left:816px;top:657.6px;width:23.2px;height:14.4px;font-size:12px;line-height:14.4px;letter-spacing:-0.4px;color:#f4f4f4">小数</span>
<span class="tx" style="left:646.4px;top:657.6px;font-size:12.2px;line-height:14.64px;color:#eef0f3;letter-spacing:-0.5px">1:1 / 100%</span>
<svg class="ic" style="left:25px;top:652px" width="1032" height="26" viewBox="25 652 1032 26"><path d="M65.6 657V672M69.7 657V672M73.8 657V672M62 660.2H77.3M62 664.3H77.3M62 668.4H77.3" stroke="#ececec" stroke-width="1.2"/><rect x="87.8" y="659" width="2" height="2" fill="#ececec"/><rect x="87.8" y="664" width="2" height="2" fill="#ececec"/><rect x="87.8" y="669" width="2" height="2" fill="#ececec"/><rect x="92.8" y="659" width="2" height="2" fill="#ececec"/><rect x="92.8" y="664" width="2" height="2" fill="#ececec"/><rect x="92.8" y="669" width="2" height="2" fill="#ececec"/><rect x="97.8" y="659" width="2" height="2" fill="#ececec"/><rect x="97.8" y="664" width="2" height="2" fill="#ececec"/><rect x="97.8" y="669" width="2" height="2" fill="#ececec"/><path d="M109.8 663h8l-4.0 4.4z" fill="#d6d6d6"/><rect x="128.8" y="667" width="8.2" height="5.8" fill="#d9d9d9"/><path d="M137 667.6V657.6H143.6V662.2H137.4" fill="none" stroke="#ececec" stroke-width="1.2"/><path d="M157.2 658.8V666M153.6 662.4H160.8" stroke="#ffffff" stroke-width="1.3"/><rect x="159.8" y="666.9" width="10" height="4" fill="#ffffff"/><rect x="161" y="668" width="1.2" height="1.8" fill="#5e8fc5"/><path d="M179.4 657V672H194.8M179.4 667.4H184.6V672" fill="none" stroke="#ececec" stroke-width="1.2"/><circle cx="209.6" cy="665.2" r="6.6" fill="none" stroke="#ffffff" stroke-width="1.3"/><path d="M218.6 665.2H209.2L216.6 658" fill="none" stroke="#ffffff" stroke-width="1.3"/><path d="M226.8 663h8l-4.0 4.4z" fill="#d6d6d6"/><path d="M250 657V672" stroke="#4fd06c" stroke-width="1.2"/><path d="M244 658L256.6 670.6" stroke="#e2474c" stroke-width="1.2"/><rect x="248.8" y="663.2" width="2.6" height="2.6" fill="#3b4453" stroke="#f4f4f4" stroke-width="0.9"/><path d="M266.6 663h8l-4.0 4.4z" fill="#d6d6d6"/><path d="M299.8 670.4H284.4L295.6 659.4" fill="none" stroke="#ffffff" stroke-width="1.3"/><rect x="288.8" y="663" width="3" height="3" fill="#ffffff"/><rect x="310.6" y="659.8" width="12.6" height="12" fill="none" stroke="#ffffff" stroke-width="1.4"/><rect x="308.4" y="657.6" width="4" height="4" fill="#5e8fc5" stroke="#ffffff" stroke-width="1"/><path d="M331.8 663h8l-4.0 4.4z" fill="#d6d6d6"/><path d="M348.8 658.2H364.8M348.8 662.8H364.8M348.8 667.8H364.8" stroke="#ececec" stroke-width="1"/><rect x="348.8" y="658.8" width="8.2" height="1.4" fill="#cfcfcf"/><rect x="348.8" y="663.4" width="8.2" height="2.2" fill="#cfcfcf"/><rect x="348.8" y="668.4" width="8.2" height="3.2" fill="#cfcfcf"/><rect x="374.4" y="657.6" width="14.8" height="14.4" fill="none" stroke="#ffffff" stroke-width="1.3"/><rect x="376.0" y="659.2" width="2.9" height="2.9" fill="#ffffff"/><rect x="376.0" y="665.0" width="2.9" height="2.9" fill="#ffffff"/><rect x="378.9" y="662.1" width="2.9" height="2.9" fill="#ffffff"/><rect x="378.9" y="667.9" width="2.9" height="2.9" fill="#ffffff"/><rect x="381.8" y="659.2" width="2.9" height="2.9" fill="#ffffff"/><rect x="381.8" y="665.0" width="2.9" height="2.9" fill="#ffffff"/><rect x="384.7" y="662.1" width="2.9" height="2.9" fill="#ffffff"/><rect x="384.7" y="667.9" width="2.9" height="2.9" fill="#ffffff"/><path d="M401.2 656.4V663M397.9 659.7H404.5" stroke="#ececec" stroke-width="1.2"/><path d="M403.6 670.8V661.3H412.8" fill="none" stroke="#ececec" stroke-width="1.2"/><rect x="405.2" y="663" width="9.8" height="9.8" fill="#7ed49b"/><path d="M428.8 667.6V662.2L433.4 657.4H440V665.6L435.6 670.6H429.6M428.8 662.2H435.6V670.6M435.6 662.2L440 657.4" fill="none" stroke="#ececec" stroke-width="1.1"/><rect x="424.2" y="668" width="4.2" height="4.2" fill="none" stroke="#f0a868" stroke-width="1.1"/><path d="M448.0 663h8l-4.0 4.4z" fill="#d6d6d6"/><path d="M469.4 660V670.6H480" fill="none" stroke="#ffffff" stroke-width="1.4"/><path d="M469.4 656.6L472 660.6H466.8ZM483 670.6L479 668V673.2Z" fill="#ffffff"/><path d="M479.4 657.2L474 663.2H476.8L474.6 667.8L480.6 661.4H477.6Z" fill="#ffffff"/><path d="M492.2 661.4L496 657.4H506.6V666.6L503 670.8" fill="none" stroke="#ececec" stroke-width="1.1"/><path d="M492.2 661.4H503V670.8H492.2Z" fill="none" stroke="#ececec" stroke-width="1.1" stroke-dasharray="3.4 1.8" stroke-dashoffset="-1.7"/><rect x="490.8" y="660.0" width="2.8" height="2.8" fill="#6ec3f4"/><rect x="490.8" y="669.4" width="2.8" height="2.8" fill="#6ec3f4"/><rect x="501.6" y="660.0" width="2.8" height="2.8" fill="#6ec3f4"/><rect x="501.6" y="669.4" width="2.8" height="2.8" fill="#6ec3f4"/><path d="M515.0 663h8l-4.0 4.4z" fill="#d6d6d6"/><path d="M538.5 657.8L545 661.4V669L538.5 672.6L532 669V661.4ZM538.5 657.8V665.2L532 669M538.5 665.2L545 669" fill="none" stroke="#ffffff" stroke-width="1.1"/><rect x="537.2" y="656.5" width="2.6" height="2.6" fill="#5e8fc5" stroke="#ffffff" stroke-width="0.9"/><rect x="530.9000000000001" y="667.7" width="2.6" height="2.6" fill="#5e8fc5" stroke="#ffffff" stroke-width="0.9"/><rect x="543.5" y="667.7" width="2.6" height="2.6" fill="#5e8fc5" stroke="#ffffff" stroke-width="0.9"/><rect x="537.2" y="663.9000000000001" width="2.6" height="2.6" fill="#5e8fc5" stroke="#ffffff" stroke-width="0.9"/><path d="M554.8 663h8l-4.0 4.4z" fill="#d6d6d6"/><path d="M581.1 656.8L584.0 663.4L582.8000000000001 665.6L585.6 667.2L588.3000000000001 673L583.9 671.7L581.1 669.2L578.3000000000001 671.7L573.9 673L576.6 667.2L579.4 665.6L578.2 663.4Z" fill="#ffffff"/><circle cx="587.1" cy="661" r="2.5" fill="none" stroke="#ffffff" stroke-width="1.1"/><path d="M605 656.8L607.9 663.4L606.7 665.6L609.5 667.2L612.2 673L607.8 671.7L605 669.2L602.2 671.7L597.8 673L600.5 667.2L603.3 665.6L602.1 663.4Z" fill="#d4d4d4"/><path d="M612.2 656.8L608.4 661H610.6L608.8 664.8L613.4 660H611.2Z" fill="#d4d4d4"/><path d="M629.9 656.8L632.8 663.4L631.6 665.6L634.4 667.2L637.1 673L632.6999999999999 671.7L629.9 669.2L627.1 671.7L622.6999999999999 673L625.4 667.2L628.1999999999999 665.6L627.0 663.4Z" fill="#d4d4d4"/><path d="M703.6 663h8l-4.0 4.4z" fill="#d6d6d6"/><circle cx="730.3" cy="664.7" r="4.3" fill="none" stroke="#e4e4e4" stroke-width="3"/><rect x="729" y="656.9" width="2.6" height="3" fill="#e4e4e4" transform="rotate(0 730.3 664.7)"/><rect x="729" y="656.9" width="2.6" height="3" fill="#e4e4e4" transform="rotate(45 730.3 664.7)"/><rect x="729" y="656.9" width="2.6" height="3" fill="#e4e4e4" transform="rotate(90 730.3 664.7)"/><rect x="729" y="656.9" width="2.6" height="3" fill="#e4e4e4" transform="rotate(135 730.3 664.7)"/><rect x="729" y="656.9" width="2.6" height="3" fill="#e4e4e4" transform="rotate(180 730.3 664.7)"/><rect x="729" y="656.9" width="2.6" height="3" fill="#e4e4e4" transform="rotate(225 730.3 664.7)"/><rect x="729" y="656.9" width="2.6" height="3" fill="#e4e4e4" transform="rotate(270 730.3 664.7)"/><rect x="729" y="656.9" width="2.6" height="3" fill="#e4e4e4" transform="rotate(315 730.3 664.7)"/><path d="M747.0 663h8l-4.0 4.4z" fill="#d6d6d6"/><path d="M771.9 656.8V673M763.8 664.9H780" stroke="#ececec" stroke-width="1.9"/><path d="M795 657H802.8V659H798.6V661H801.4V663H798.6V665H802.8V667H798.6V669H801.4V671H798.6V672.6H795Z" fill="#f2f2f2"/><path d="M872.0 663h8l-4.0 4.4z" fill="#d6d6d6"/><rect x="891.6" y="657.6" width="11" height="14.6" fill="none" stroke="#ececec" stroke-width="1.2"/><path d="M891.6 659.4H902.6" stroke="#ececec" stroke-width="1.4"/><path d="M896.6 663H900.8M896.6 666.2H900.8M896.6 669.4H900.8" stroke="#ececec" stroke-width="1.1"/><path d="M893.6 662.2H895.4V663.9H893.6ZM893.6 665.4H895.4V667.1H893.6ZM893.6 668.6H895.4V670.3H893.6Z" fill="#ececec"/><path d="M923 669.4H916.2V657.6H929.2V663" fill="none" stroke="#ececec" stroke-width="1.2"/><path d="M916.2 659.4H929.2" stroke="#ececec" stroke-width="1.4"/><rect x="923" y="667.6" width="6.8" height="5.2" fill="#ececec"/><path d="M925.2 667.6V666A2.3 2.3 0 0 1 929.8 666" fill="none" stroke="#ececec" stroke-width="1.1"/><rect x="925.8" y="669.4" width="1.2" height="1.6" fill="#3b4453"/><path d="M939.6 663h8l-4.0 4.4z" fill="#d6d6d6"/><rect x="957.6" y="657.6" width="5.8" height="5.8" fill="none" stroke="#ececec" stroke-width="1.1"/><circle cx="969.4" cy="663.4" r="2.9" fill="none" stroke="#ececec" stroke-width="1.1"/><path d="M963.6 666.6L967 672.2H960.2Z" fill="none" stroke="#ececec" stroke-width="1.1"/><circle cx="991.8" cy="665" r="7.6" fill="#93b4de" stroke="#ffffff" stroke-width="1.2"/><path d="M991.4 668.8L997 663.2" stroke="#ffffff" stroke-width="1.7" stroke-linecap="round"/><rect x="1011.4" y="659.6" width="15" height="10.6" fill="none" stroke="#ececec" stroke-width="1.2"/><path d="M1014 667.6L1017 664.6M1023.8 662.2L1020.8 665.2" stroke="#ececec" stroke-width="1"/><path d="M1013.4 668.4V665.2L1016.6 668.4ZM1024.4 661.4V664.6L1021.2 661.4Z" fill="#ececec"/><path d="M1035 658.8H1050.4M1035 665H1050.4M1035 671.2H1050.4" stroke="#ececec" stroke-width="1.9"/></svg>
</div>
</body></html>
